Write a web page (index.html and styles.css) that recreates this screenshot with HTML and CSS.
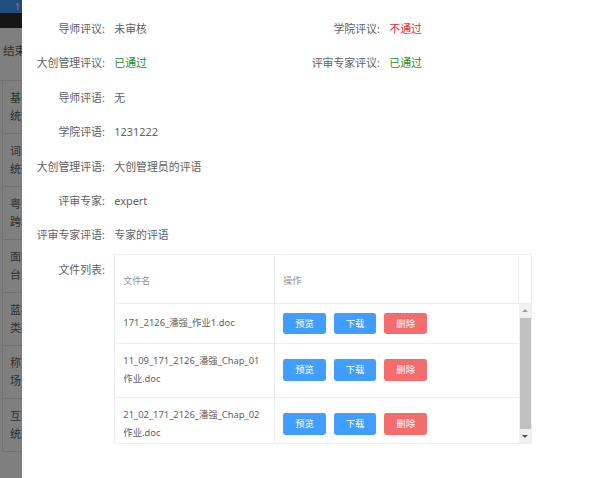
FILE: index.html
```html
<!DOCTYPE html>
<html lang="zh-CN">
<head>
<meta charset="utf-8">
<title>项目详情</title>
<link rel="stylesheet" href="styles.css">
</head>
<body>
<div class="page">
  <header class="topbar"><span class="brand">1</span></header>
  <nav class="navbar"></nav>
  <main class="list">
    <div class="list-title">结束</div>
    <div class="list-table">
      <div class="list-row"><span>基于</span><span>统计</span></div>
      <div class="list-row"><span>词汇</span><span>统一</span></div>
      <div class="list-row"><span>粤港</span><span>跨境</span></div>
      <div class="list-row"><span>面向</span><span>台账</span></div>
      <div class="list-row"><span>蓝桥</span><span>类别</span></div>
      <div class="list-row"><span>称重</span><span>场景</span></div>
      <div class="list-row"><span>互联</span><span>统筹</span></div>
    </div>
  </main>
</div>

<div class="mask"></div>

<div class="dialog">
  <div class="dialog-body">
    <div class="form-grid">
      <div class="item"><label class="item-label">导师评议:</label><div class="item-value">未审核</div></div>
      <div class="item"><label class="item-label">学院评议:</label><div class="item-value status-fail">不通过</div></div>
      <div class="item"><label class="item-label">大创管理评议:</label><div class="item-value status-pass">已通过</div></div>
      <div class="item"><label class="item-label">评审专家评议:</label><div class="item-value status-pass">已通过</div></div>
    </div>
    <div class="item"><label class="item-label">导师评语:</label><div class="item-value">无</div></div>
    <div class="item"><label class="item-label">学院评语:</label><div class="item-value">1231222</div></div>
    <div class="item"><label class="item-label">大创管理评语:</label><div class="item-value">大创管理员的评语</div></div>
    <div class="item"><label class="item-label">评审专家:</label><div class="item-value">expert</div></div>
    <div class="item"><label class="item-label">评审专家评语:</label><div class="item-value">专家的评语</div></div>
    <div class="item">
      <label class="item-label">文件列表:</label>
      <div class="file-table">
        <div class="thead">
          <div class="th">文件名</div>
          <div class="th">操作</div>
          <div class="th gutter"></div>
        </div>
        <div class="tbody">
          <div class="rows">
            <div class="tr">
              <div class="td td-name">171_2126_潘强_作业1.doc</div>
              <div class="td td-actions"><button class="btn">预览</button><button class="btn">下载</button><button class="btn btn-danger">删除</button></div>
            </div>
            <div class="tr">
              <div class="td td-name">11_09_171_2126_潘强_Chap_01作业.doc</div>
              <div class="td td-actions"><button class="btn">预览</button><button class="btn">下载</button><button class="btn btn-danger">删除</button></div>
            </div>
            <div class="tr">
              <div class="td td-name">21_02_171_2126_潘强_Chap_02作业.doc</div>
              <div class="td td-actions"><button class="btn">预览</button><button class="btn">下载</button><button class="btn btn-danger">删除</button></div>
            </div>
          </div>
          <div class="scrollbar">
            <div class="sb-btn"><span class="arrow-up"></span></div>
            <div class="sb-track"><div class="sb-thumb"></div></div>
            <div class="sb-btn"><span class="arrow-down"></span></div>
          </div>
        </div>
      </div>
    </div>
  </div>
</div>
</body>
</html>
```

FILE: styles.css
```css
html, body {
  margin: 0;
  padding: 0;
  height: 100%;
  overflow: hidden;
  background: #fff;
  font-family: "Noto Sans", "Noto Sans CJK SC", sans-serif;
}

/* underlying page */
.page {
  color: #606266;
  font-size: 11px;
}
.topbar {
  height: 13px;
  background: #409eff;
  overflow: hidden;
}
.brand {
  display: block;
  padding-left: 15px;
  color: #fff;
  font-size: 9px;
  line-height: 13px;
  white-space: nowrap;
}
.navbar {
  height: 15px;
  background: #2d2d2d;
}
.list-title {
  height: 52px;
  line-height: 45px;
  padding-left: 3px;
  font-size: 11.5px;
  white-space: nowrap;
  border-bottom: 1px solid #e2e2e2;
}
.list-table {
  margin-left: 2px;
  border-left: 1px solid #e2e2e2;
}
.list-row {
  height: 52px;
  border-bottom: 1px solid #e2e2e2;
  padding-left: 7px;
  display: flex;
  flex-direction: column;
  justify-content: center;
  align-items: flex-start;
  line-height: 18.5px;
  white-space: nowrap;
}

/* mask + dialog */
.mask {
  position: fixed;
  inset: 0;
  background: rgba(0, 0, 0, 0.5);
}
.dialog {
  position: fixed;
  top: 0;
  left: 22px;
  right: 0;
  bottom: 0;
  background: #fff;
  overflow: hidden;
  color: #606266;
}
.dialog-body {
  padding-top: 11.8px;
}
.form-grid {
  display: grid;
  grid-template-columns: 275px 275px;
}
.item {
  display: flex;
  align-items: flex-start;
}
.item-label {
  flex: none;
  width: 92.3px;
  box-sizing: border-box;
  padding-right: 9.4px;
  text-align: right;
  font-size: 10.9px;
  line-height: 34.43px;
  white-space: nowrap;
  color: #606266;
}
.item-value {
  font-size: 10.9px;
  line-height: 34.43px;
  white-space: nowrap;
}
.status-pass { color: #1f8f1f; }
.status-fail { color: #f02a2a; }

/* file table */
.file-table {
  margin-top: 1.2px;
  width: 418px;
  box-sizing: border-box;
  border: 1px solid #ebeef5;
  font-size: 9.4px;
}
.thead {
  display: grid;
  grid-template-columns: 160px 244px 12px;
  height: 48px;
  border-bottom: 1px solid #ebeef5;
}
.th {
  box-sizing: border-box;
  border-right: 1px solid #ebeef5;
  padding: 2px 8px 0;
  display: flex;
  align-items: center;
  color: #909399;
  font-size: 9px;
}
.th.gutter {
  border-right: none;
  padding: 0;
}
.tbody {
  display: flex;
  height: 139px;
}
.rows {
  flex: 1;
  min-width: 0;
  overflow: hidden;
}
.scrollbar {
  flex: none;
  width: 12px;
  display: flex;
  flex-direction: column;
  background: #f1f1f1;
}
.sb-btn {
  flex: none;
  height: 13px;
  display: flex;
  align-items: center;
  justify-content: center;
}
.arrow-up {
  width: 0;
  height: 0;
  border-left: 3px solid transparent;
  border-right: 3px solid transparent;
  border-bottom: 3px solid #a3a3a3;
}
.arrow-down {
  width: 0;
  height: 0;
  border-left: 3px solid transparent;
  border-right: 3px solid transparent;
  border-top: 3px solid #505050;
}
.sb-track {
  flex: 1;
  padding: 1px 0 0 1px;
}
.sb-thumb {
  height: 111px;
  background: #c1c1c1;
}
.tr {
  display: grid;
  grid-template-columns: 160px 244px;
  border-bottom: 1px solid #ebeef5;
}
.td {
  box-sizing: border-box;
  padding: 8.5px 8px;
  line-height: 18px;
}
.td-name {
  border-right: 1px solid #ebeef5;
  word-break: break-all;
  color: #606266;
  display: flex;
  align-items: center;
}
.td-actions {
  display: flex;
  align-items: center;
  gap: 8px;
}
.btn {
  height: 21.5px;
  padding: 0 11.9px;
  border: none;
  border-radius: 2.4px;
  background: #409eff;
  color: #fff;
  font-family: "Noto Sans", "Noto Sans CJK SC", sans-serif;
  font-size: 9.4px;
  line-height: 21.5px;
  cursor: pointer;
}
.btn-danger {
  background: #f56c6c;
}
```
